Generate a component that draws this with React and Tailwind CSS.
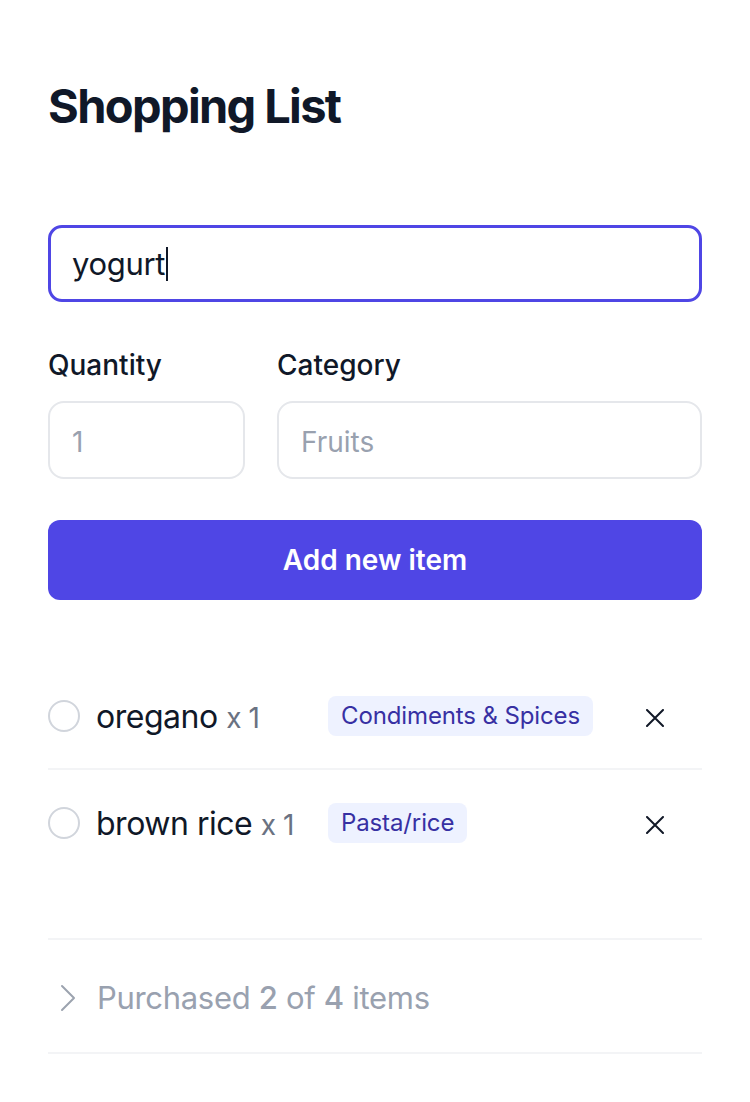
import React, { useState } from 'react';

const items = [
  { id: 1, name: 'oregano', qty: 1, category: 'Condiments & Spices' },
  { id: 2, name: 'brown rice', qty: 1, category: 'Pasta/rice' },
];

const ShoppingList = () => {
  const [name] = useState('yogurt');

  return (
    <div className="min-h-[1102px] bg-white px-12 pt-[74px] font-['Inter',sans-serif] text-gray-900">
      <h1 className="text-[47px] font-bold leading-[64px] tracking-[-0.035em]">Shopping List</h1>

      {/* name field, focused */}
      <div className="mt-[87px] flex h-[77px] items-center rounded-[14px] border-[3px] border-[#4f46e5] px-[21px]">
        <span className="text-[31px] leading-none tracking-[-0.01em]">{name}</span>
        <span className="ml-px h-[34px] w-[2px] bg-gray-900"></span>
      </div>

      <div className="mt-[43px] flex gap-8">
        <div className="flex w-[197px] flex-col">
          <label className="text-[28px] font-medium leading-[40px]">Quantity</label>
          <div className="mt-4 flex h-[78px] items-center rounded-2xl border-2 border-gray-200 px-[22px] pt-[3px] text-[28px] text-gray-400">
            1
          </div>
        </div>
        <div className="flex flex-1 flex-col">
          <label className="text-[28px] font-medium leading-[40px]">Category</label>
          <div className="mt-4 flex h-[78px] items-center rounded-2xl border-2 border-gray-200 px-[22px] pt-[3px] text-[28px] text-gray-400">
            Fruits
          </div>
        </div>
      </div>

      <button className="mt-[41px] flex h-20 w-full items-center justify-center rounded-xl bg-[#4f46e5] text-[28px] font-semibold text-white">
        Add new item
      </button>

      <ul className="mt-16">
        {items.map((item, i) => (
          <li
            key={item.id}
            className={`flex h-[106px] items-center ${i === 0 ? 'border-b-2 border-gray-100' : ''}`}
          >
            <span className="h-8 w-8 shrink-0 rounded-full border-2 border-gray-300"></span>
            <span className="ml-4 w-[232px] shrink-0 pt-[2px] text-[32px] leading-none tracking-[-0.015em]">
              {item.name} <span className="text-[28px] text-gray-500">x {item.qty}</span>
            </span>
            <span className="flex h-10 items-center rounded-lg bg-[#eef2ff] px-[13px] text-[24px] tracking-[-0.005em] text-[#3730a3]">
              {item.category}
            </span>
            <button className="ml-auto mr-[23px] flex h-12 w-12 items-center justify-center pt-[3px]">
              <svg width="18" height="18" viewBox="0 0 18 18" fill="none" stroke="#111827" strokeWidth="2" strokeLinecap="round">
                <path d="M1 1L17 17M17 1L1 17" />
              </svg>
            </button>
          </li>
        ))}
      </ul>

      <div className="mt-[62px] flex h-[116px] items-center border-y-2 border-gray-100">
        <svg className="ml-3 mt-1" width="16" height="28" viewBox="0 0 16 28" fill="none" stroke="#9ca3af" strokeWidth="2" strokeLinecap="round" strokeLinejoin="round">
          <path d="M2 2L14 14L2 26" />
        </svg>
        <span className="ml-[21px] mt-1 text-[31px] tracking-[-0.01em] text-gray-400">
          Purchased <span className="font-medium">2</span> of <span className="font-medium">4</span> items
        </span>
      </div>
    </div>
  );
};

export default ShoppingList;
